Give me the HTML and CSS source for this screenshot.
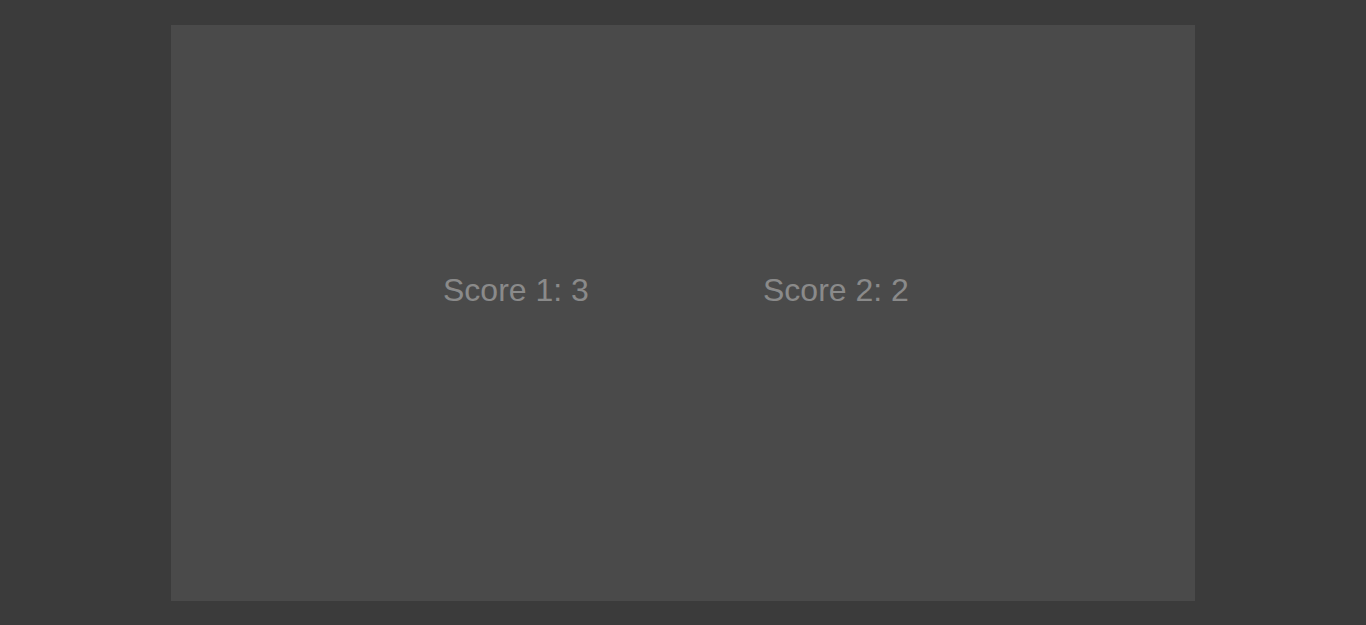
FILE: index.html
```html
<!DOCTYPE html>
<html>
<head>
<meta charset="utf-8">
<link rel="stylesheet" href="styles.css">
</head>
<body>
<div class="stage">
  <div class="scores">
    <span class="score">Score 1: 3</span>
    <span class="score">Score 2: 2</span>
  </div>
</div>
</body>
</html>
```
FILE: styles.css
```css
html, body {
  margin: 0;
  padding: 0;
  height: 100%;
}
body {
  background: #3b3b3b;
  display: flex;
  align-items: center;
  justify-content: center;
  font-family: "Liberation Sans", Arial, sans-serif;
}
.stage {
  width: 1024px;
  height: 576px;
  background: #4a4a4a;
  box-sizing: border-box;
  padding: 249px 0 0 272px;
}
.scores {
  display: flex;
}
.score {
  width: 320px;
  font-size: 32px;
  line-height: 32px;
  color: #8a8a8a;
}
```
